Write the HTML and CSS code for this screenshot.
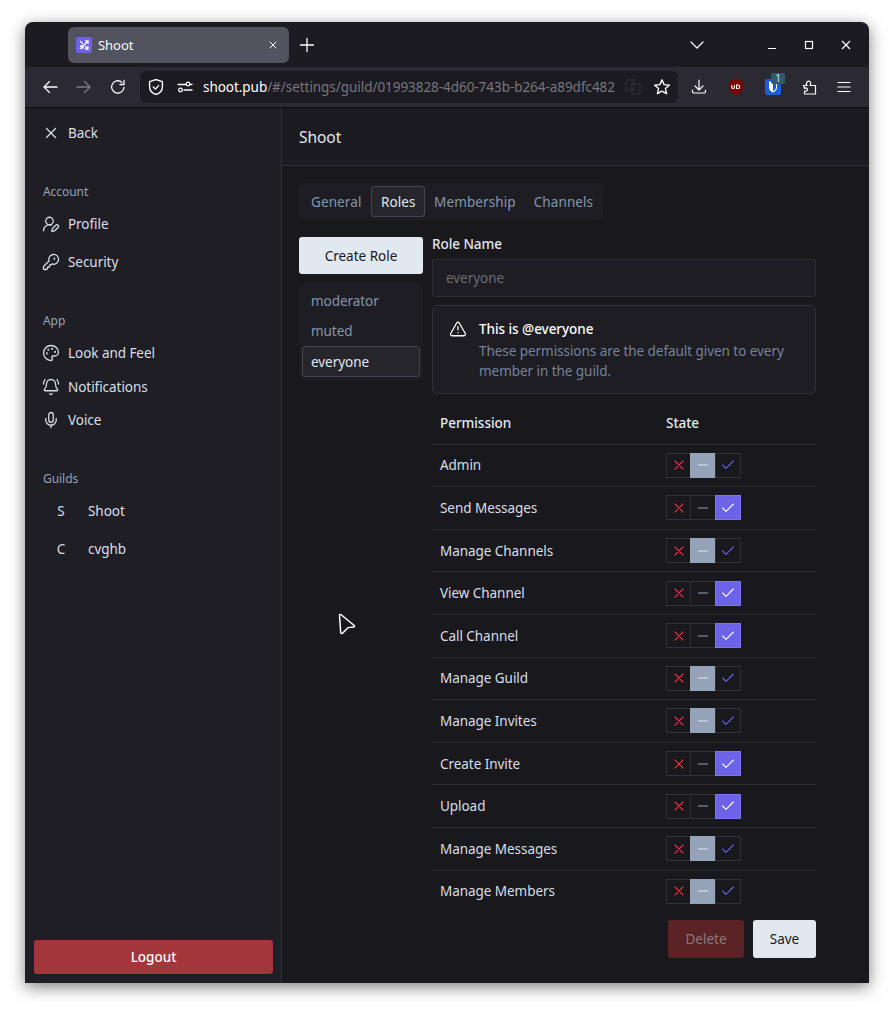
FILE: index.html
```html
<!DOCTYPE html>
<html lang="en">
<head>
    <meta charset="UTF-8">
    <meta name="viewport" content="width=device-width, initial-scale=1.0">
    <title>Shoot</title>
    <link rel="stylesheet" href="styles.css">
</head>
<body>
    <div class="window">
        <div class="titlebar">
            <div class="tab">
                <svg class="favicon" viewBox="0 0 16 16"><rect width="16" height="16" rx="2" fill="#6c63e8"/><path d="M4 12 12 4M9 4h3v3M4 4l3 3M9 9l3 3M12 9v3H9M4 9h3v3" fill="none" stroke="#fff" stroke-width="1.3"/></svg>
                <span class="tab-title">Shoot</span>
                <svg class="ico tab-close" viewBox="0 0 24 24"><path d="M18 6 6 18M6 6l12 12"/></svg>
            </div>
            <svg class="ico new-tab" viewBox="0 0 16 16"><path d="M8 1.5v13M1.5 8h13"/></svg>
            <div class="spacer"></div>
            <svg class="ico tab-list" viewBox="0 0 16 16"><path d="M2 5l6 6 6-6"/></svg>
            <svg class="ico win-btn" viewBox="0 0 16 16"><path d="M4 11.5h8"/></svg>
            <svg class="ico win-btn" viewBox="0 0 16 16"><rect x="4.5" y="4.5" width="7" height="7"/></svg>
            <svg class="ico win-btn" viewBox="0 0 16 16"><path d="M4 4l8 8M12 4l-8 8"/></svg>
        </div>

        <div class="toolbar">
            <svg class="ico tool-btn" viewBox="0 0 16 16"><path d="M15 8H2M7.5 2.5 2 8l5.5 5.5"/></svg>
            <svg class="ico tool-btn dim" viewBox="0 0 16 16"><path d="M1 8h13M8.500 2.500 14 8l-5.500 5.500"/></svg>
            <svg class="ico tool-btn" viewBox="0 0 16 16"><path d="M14 8.500A6.200 6.200 0 1 1 11.800 3.200M14 1.500v4h-4"/></svg>
            <div class="urlbar">
                <svg class="ico url-ico" viewBox="1 0.5 14 15"><path d="M8 1l6 2v5c0 3.500-3 6-6 7-3-1-6-3.500-6-7V3z"/><path d="M5.500 8l2 2 3-3.500"/></svg>
                <svg class="ico url-ico sliders" viewBox="0 0 16 16"><path d="M1 5.500h8M13 5.500h2M7 11h8"/><circle cx="11" cy="5" r="1.800"/><circle cx="3.500" cy="11" r="1.800"/></svg>
                <div class="url-text">shoot.pub<span class="url-dim">/#/settings/guild/01993828-4d60-743b-b264-a89dfc482</span></div>
                <svg class="ico translate" viewBox="0 0 16 16"><path d="M1 1h8v10H1zM7 5h8v10H7z"/></svg>
                <svg class="ico star" viewBox="0.5 0.5 15 15"><path d="M8 1.300l2 4.500 4.900.5-3.700 3.200 1.100 4.800L8 11.800l-4.300 2.500 1.100-4.800L1.100 6.300 6 5.800z"/></svg>
            </div>
            <svg class="ico ext first" viewBox="0 0 16 16"><path d="M8 1v9.500M4 7l4 4 4-4M1.500 11v1.500a1.500 1.500 0 0 0 1.500 1.500h10a1.500 1.500 0 0 0 1.500-1.500V11"/></svg>
            <svg class="ext" viewBox="0 0 16 16"><path d="M8 0l6.500 2v7.200c0 3-3 5.300-6.500 6.800-3.500-1.500-6.500-3.800-6.500-6.800V2z" fill="#800000"/><path d="M3.800 6v2.200a1.300 1.300 0 0 0 2.600 0V6M8.500 6v3.500h1.500a1.700 1.700 0 0 0 0-3.500z" fill="none" stroke="#fff" stroke-width="1.100"/></svg>
            <div class="ext bitwarden">
                <svg viewBox="0 0 16 16"><rect width="16" height="16" rx="2" fill="#175ddc"/><path d="M4 2.500h8v6c0 2.500-2 4-4 5-2-1-4-2.500-4-5z" fill="#fff"/><path d="M8 3.500h3v5c0 1.500-1.500 3-3 3.500z" fill="#175ddc"/></svg>
                <span class="ext-badge">1</span>
            </div>
            <svg class="ico ext" viewBox="0 0 16 16"><path d="M1.500 6.500H5c-1-1-1-2 0-3.500 1-1.500 3-1 3.500 0 .5 1 .5 2-.5 3.500h5.500v8.500H2.500v-3c1.500.5 3 0 3-1.500S4 8.500 2.500 9.500z"/></svg>
            <svg class="ico ext menu" viewBox="0 0 16 16"><path d="M2 3.500h12M2 8h12M2 12.500h12"/></svg>
        </div>

        <div class="app">
            <aside class="sidebar">
                <a class="nav-item back">
                    <svg class="ico" viewBox="0 0 24 24"><path d="M18 6 6 18M6 6l12 12"/></svg>
                    Back
                </a>

                <div class="nav-label nav-label-account">Account</div>
                <a class="nav-item tall first-item">
                    <svg class="ico" viewBox="0 0 24 24"><path d="M2 21a8 8 0 0 1 10.821-7.487"/><path d="M21.378 16.626a1 1 0 0 0-3.004-3.004l-4.010 4.012a2 2 0 0 0-.506.854l-.837 2.870a.5.5 0 0 0 .620.620l2.870-.837a2 2 0 0 0 .854-.506z"/><circle cx="10" cy="8" r="5"/></svg>
                    Profile
                </a>
                <a class="nav-item tall">
                    <svg class="ico" viewBox="0 0 24 24"><path d="M2.586 17.414A2 2 0 0 0 2 18.828V21a1 1 0 0 0 1 1h3a1 1 0 0 0 1-1v-1a1 1 0 0 1 1-1h1a1 1 0 0 0 1-1v-1a1 1 0 0 1 1-1h.172a2 2 0 0 0 1.414-.586l.814-.814a6.500 6.500 0 1 0-4-4z"/><circle cx="16.500" cy="7.500" r=".5"/></svg>
                    Security
                </a>

                <div class="nav-label">App</div>
                <a class="nav-item first-item">
                    <svg class="ico" viewBox="0 0 24 24"><path d="M12 22a1 1 0 0 1 0-20 10 9 0 0 1 10 9 5 5 0 0 1-5 5h-2.250a1.750 1.750 0 0 0-1.400 2.800l.3.4a1.750 1.750 0 0 1-1.400 2.800z"/><circle cx="13.500" cy="6.500" r=".5"/><circle cx="17.500" cy="10.500" r=".5"/><circle cx="6.500" cy="12.500" r=".5"/><circle cx="8.500" cy="7.500" r=".5"/></svg>
                    Look and Feel
                </a>
                <a class="nav-item">
                    <svg class="ico" viewBox="0 0 24 24"><path d="M10.268 21a2 2 0 0 0 3.464 0"/><path d="M22 8c0-2.300-.8-4.300-2-6"/><path d="M3.262 15.326A1 1 0 0 0 4 17h16a1 1 0 0 0 .74-1.673C19.410 13.956 18 12.499 18 8A6 6 0 0 0 6 8c0 4.499-1.411 5.956-2.738 7.326"/><path d="M4 2C2.800 3.700 2 5.700 2 8"/></svg>
                    Notifications
                </a>
                <a class="nav-item">
                    <svg class="ico" viewBox="0 0 24 24"><path d="M12 19v3"/><path d="M19 10v2a7 7 0 0 1-14 0v-2"/><rect x="9" y="2" width="6" height="13" rx="3"/></svg>
                    Voice
                </a>

                <div class="nav-label nav-label-guilds">Guilds</div>
                <a class="nav-item tall guild-first"><span class="guild-icon">S</span>Shoot</a>
                <a class="nav-item tall"><span class="guild-icon">C</span>cvghb</a>

                <button class="logout">Logout</button>
            </aside>

            <main class="main">
                <div class="main-header">Shoot</div>
                <div class="main-body">
                    <div class="tabs">
                        <div class="tabs-item">General</div>
                        <div class="tabs-item active">Roles</div>
                        <div class="tabs-item">Membership</div>
                        <div class="tabs-item">Channels</div>
                    </div>

                    <div class="roles">
                        <div class="roles-left">
                            <button class="btn btn-light btn-create">Create Role</button>
                            <div class="role-list">
                                <div class="role-item">moderator</div>
                                <div class="role-item">muted</div>
                                <div class="role-item active">everyone</div>
                            </div>
                        </div>

                        <div class="roles-right">
                            <label class="field-label">Role Name</label>
                            <div class="field-input">everyone</div>

                            <div class="alert">
                                <svg class="ico alert-ico" viewBox="0 0 24 24"><path d="m21.730 18-8-14a2 2 0 0 0-3.480 0l-8 14A2 2 0 0 0 4 21h16a2 2 0 0 0 1.730-3"/><path d="M12 9v4"/><path d="M12 17h.01"/></svg>
                                <div>
                                    <div class="alert-title">This is @everyone</div>
                                    <div class="alert-text">These permissions are the default given to every member in the guild.</div>
                                </div>
                            </div>

                            <div id="perm-table">
                                <div class="perm-row perm-head">
                                    <div class="perm-name">Permission</div>
                                    <div>State</div>
                                </div>
                            </div>

                            <div class="actions">
                                <button class="btn btn-delete">Delete</button>
                                <button class="btn btn-light btn-save">Save</button>
                            </div>
                        </div>
                    </div>
                </div>
            </main>

            <svg class="cursor" viewBox="0 0 18 22"><path d="M1.500 2.500c0-1 1-1.300 1.700-.7l13 10.700c.6.5.3 1.400-.5 1.500l-5.700.6-5.500 5.600c-.6.6-1.700.3-1.800-.6z" fill="#17171c" stroke="#fff" stroke-width="1.500"/></svg>
        </div>
    </div>

    <script>
        // state: 0 = deny, 1 = inherit, 2 = allow
        const permissions = [
            ["Admin", 1],
            ["Send Messages", 2],
            ["Manage Channels", 1],
            ["View Channel", 2],
            ["Call Channel", 2],
            ["Manage Guild", 1],
            ["Manage Invites", 1],
            ["Create Invite", 2],
            ["Upload", 2],
            ["Manage Messages", 1],
            ["Manage Members", 1]
        ];

        const icons = [
            '<path d="M18 6 6 18M6 6l12 12"/>',
            '<path d="M5 12h14"/>',
            '<path d="M20 6 9 17l-5-5"/>'
        ];
        const iconClasses = ["deny", "inherit", "allow"];

        const table = document.getElementById("perm-table");

        permissions.forEach(([name, state]) => {
            const row = document.createElement("div");
            row.className = "perm-row";

            let cells = "";
            icons.forEach((icon, index) => {
                const on = index === state ? " on" : "";
                cells += `<div class="state-cell ${iconClasses[index]}${on}"><svg class="ico" viewBox="0 0 24 24">${icon}</svg></div>`;
            });

            row.innerHTML = `<div class="perm-name">${name}</div><div class="state-group">${cells}</div>`;
            table.appendChild(row);
        });
    </script>
</body>
</html>
```

FILE: styles.css
```css
* {
    box-sizing: border-box;
}

body {
    font-family: "Noto Sans", Arial, sans-serif;
    font-size: 13.5px;
    letter-spacing: -0.05px;
    background-color: #fff;
    color: #e2e8f0;
    margin: 0;
}

.window {
    width: 844px;
    height: 961px;
    margin: 22px 25px 28px;
    border-radius: 8px 8px 0 0;
    overflow: hidden;
    display: flex;
    flex-direction: column;
    background-color: #1c1b22;
    box-shadow: 0 4px 16px rgba(0, 0, 0, 0.5);
}

.ico {
    fill: none;
    stroke: currentColor;
    stroke-width: 2;
    stroke-linecap: round;
    stroke-linejoin: round;
    flex: none;
    width: 16px;
    height: 16px;
}

.spacer {
    flex: 1;
}

/* browser chrome */
.titlebar {
    height: 45px;
    flex: none;
    display: flex;
    align-items: center;
    padding: 0 15px 0 43px;
    color: #fbfbfe;
}

.tab {
    width: 221px;
    height: 36px;
    margin-top: 1px;
    background-color: #53535f;
    border-radius: 6px;
    display: flex;
    align-items: center;
    padding: 0 8px;
    font-size: 13px;
}

.favicon {
    width: 16px;
    height: 16px;
    flex: none;
}

.tab-title {
    margin-left: 6px;
    flex: 1;
}

.tab .tab-close {
    width: 12px;
    height: 12px;
    margin-right: 2px;
}

.new-tab {
    margin-left: 10px;
    stroke-width: 1.3;
}

.tab-list {
    margin-right: 38px;
    stroke-width: 1.200;
}

.win-btn {
    margin-left: 21px;
    stroke-width: 1.200;
    stroke-linecap: butt;
    stroke-linejoin: miter;
}

.toolbar {
    height: 41px;
    flex: none;
    display: flex;
    align-items: center;
    padding: 0 7px 1px 17px;
    background-color: #2b2a33;
    border-bottom: 1px solid #0c0c0f;
    color: #fbfbfe;
}

.tool-btn {
    margin-right: 18px;
    stroke-width: 1.300;
}

.tool-btn.dim {
    color: #7b7a80;
}

.urlbar {
    width: 538px;
    height: 32px;
    margin-left: -4px;
    border-radius: 6px;
    background-color: #1c1b22;
    display: flex;
    align-items: center;
    padding: 0 8px;
    font-size: 14px;
}

.url-ico {
    stroke-width: 1.300;
}

.sliders {
    margin-left: 13px;
}

.url-text {
    margin-left: 10px;
    width: 416px;
    white-space: nowrap;
    font-size: 13.5px;
    color: #fbfbfe;
}

.url-dim {
    color: #77767c;
}

.translate {
    margin-left: 7px;
    color: #303036;
    stroke-width: 1.200;
}

.star {
    margin-left: 13px;
    stroke-width: 1.300;
}

.ext {
    width: 16px;
    height: 16px;
    flex: none;
    margin-left: 21px;
    stroke-width: 1.200;
}

.ext.first {
    margin-left: 13px;
}

.ext.menu {
    margin-left: 18px;
}

.bitwarden {
    position: relative;
}

.bitwarden svg {
    display: block;
    width: 16px;
    height: 16px;
}

.ext-badge {
    position: absolute;
    left: 6px;
    top: -6px;
    width: 14px;
    height: 11px;
    border-radius: 2px;
    background-color: #315a6e;
    color: #d6e4ea;
    font-size: 10px;
    line-height: 11px;
    text-align: center;
}

/* app */
.app {
    flex: 1;
    min-height: 0;
    display: flex;
    position: relative;
    background-color: #18181d;
}

.cursor {
    position: absolute;
    left: 313px;
    top: 505px;
    width: 18px;
    height: 22px;
}

.sidebar {
    width: 257px;
    flex: none;
    display: flex;
    flex-direction: column;
    padding: 8px 8px 9px 18px;
    background-color: #1f1e24;
    border-right: 1px solid #303036;
}

.nav-item {
    height: 34px;
    flex: none;
    display: flex;
    align-items: center;
    gap: 8px;
    padding-bottom: 1px;
    color: #d8dfe8;
}

.nav-item .ico {
    width: 18px;
    height: 18px;
    margin-left: -1px;
    stroke-width: 1.700;
}

.nav-item.tall {
    height: 38px;
}

.first-item {
    margin-top: 7px;
}

.nav-label-account + .tall {
    margin-top: 5px;
}

.nav-label + .nav-item + .nav-item + .nav-item {
    height: 33px;
}

.nav-item.guild-first {
    height: 37px;
    margin-top: 6px;
}

.nav-label {
    height: 16px;
    line-height: 16px;
    flex: none;
    margin-top: 32px;
    font-size: 12px;
    color: #94a3b8;
}

.nav-label-account {
    margin-top: 34px;
}

.nav-label-guilds {
    margin-top: 34px;
}

.guild-icon {
    width: 36px;
    margin-right: 1px;
    text-align: center;
}

.logout {
    margin: auto 0 0 -9px;
    width: 239px;
    height: 34px;
    flex: none;
    border: none;
    border-radius: 3px;
    background-color: #a3363b;
    color: #fff;
    font-family: inherit;
    font-size: 13.5px;
    font-weight: 500;
}

.main {
    flex: 1;
    min-width: 0;
}

.main-header {
    height: 58px;
    display: flex;
    align-items: center;
    padding-left: 17px;
    font-size: 15.5px;
    background-color: #1c1b21;
    border-bottom: 1px solid #303036;
}

.main-body {
    padding: 17px 53px 0 17px;
}

.tabs {
    width: 304px;
    height: 37px;
    display: flex;
    align-items: center;
    padding: 0 3px;
    background-color: #1e1d23;
    border-radius: 5px;
    letter-spacing: 0.1px;
    color: #8595ad;
}

.tabs-item {
    height: 31px;
    line-height: 31px;
    padding: 0 8px;
    border: 1px solid transparent;
    border-radius: 3px;
    white-space: nowrap;
}

.tabs-item.active {
    margin-left: 1px;
    padding: 0 8.500px;
    background-color: #26252c;
    border-color: #45454d;
    color: #e2e8f0;
}

.roles {
    display: flex;
    gap: 9px;
    margin-top: 17px;
}

.roles-left {
    width: 124px;
    flex: none;
}

.roles-right {
    flex: 1;
    min-width: 0;
}

.btn {
    border: none;
    border-radius: 3px;
    font-family: inherit;
    font-size: 13.5px;
}

.btn-light {
    background-color: #e2e8f0;
    color: #18181d;
}

.btn-create {
    width: 100%;
    height: 37px;
}

.role-list {
    margin-top: 9px;
    padding: 3px;
    height: 97px;
    background-color: #1e1d23;
    border-radius: 5px;
    color: #8595ad;
}

.role-item {
    height: 30px;
    line-height: 30px;
    padding: 0 9px;
    border-radius: 3px;
}

.role-item.active {
    height: 31px;
    background-color: #26252c;
    border: 1px solid #45454d;
    padding: 0 8px;
    line-height: 31px;
    color: #e2e8f0;
}

.field-label {
    display: block;
    height: 22px;
    line-height: 14px;
    font-weight: 500;
}

.field-input {
    height: 38px;
    line-height: 36px;
    padding: 0 13px;
    background-color: #1e1d23;
    border: 1px solid #2b2b31;
    border-radius: 3px;
    color: #6b6b72;
}

.alert {
    margin-top: 8px;
    height: 89px;
    display: flex;
    gap: 12px;
    padding: 13px 16px 0;
    background-color: #1e1d23;
    border: 1px solid #303036;
    border-radius: 5px;
}

.alert-ico {
    width: 18px;
    height: 18px;
    margin-top: 1px;
    color: #fff;
    stroke-width: 1.700;
}

.alert-title {
    line-height: 20px;
    margin-bottom: 2px;
    color: #fff;
    font-weight: 500;
}

.alert-text {
    line-height: 20px;
    color: #75839a;
}

.perm-row {
    height: 42.600px;
    display: flex;
    align-items: center;
    border-top: 1px solid #2b2b31;
}

.perm-head {
    height: 41.600px;
    margin-top: 8px;
    border-top: none;
    font-weight: 500;
}

.perm-name {
    width: 226px;
    padding-left: 8px;
    margin-right: 8px;
    color: #d8dfe8;
}

.perm-head .perm-name {
    color: #e2e8f0;
}

.state-group {
    display: flex;
    width: 75px;
    height: 25px;
}

.state-cell {
    width: 26px;
    height: 25px;
    flex: none;
    display: flex;
    align-items: center;
    justify-content: center;
    border: 1px solid #303036;
    margin-left: -1px;
}

.state-cell:first-child {
    width: 25px;
    margin-left: 0;
}

.state-cell .ico {
    width: 16px;
    height: 16px;
    stroke-width: 1.600;
}

.state-cell.deny {
    color: #ee2f3c;
}

.state-cell.inherit {
    color: #94a3b8;
}

.state-cell.allow {
    color: #6c63e8;
}

.state-cell.inherit.on {
    background-color: #94a3b8;
    border-color: #94a3b8;
    color: #e2e8f0;
}

.state-cell.allow.on {
    background-color: #6c63e8;
    border-color: #7b73f0;
    color: #fff;
}

.actions {
    display: flex;
    justify-content: flex-end;
    gap: 9px;
    margin-top: 8px;
}

.btn-delete {
    width: 76px;
    height: 38px;
    background-color: #5c2327;
    color: #867a7c;
}

.btn-save {
    width: 63px;
    height: 38px;
}
```
